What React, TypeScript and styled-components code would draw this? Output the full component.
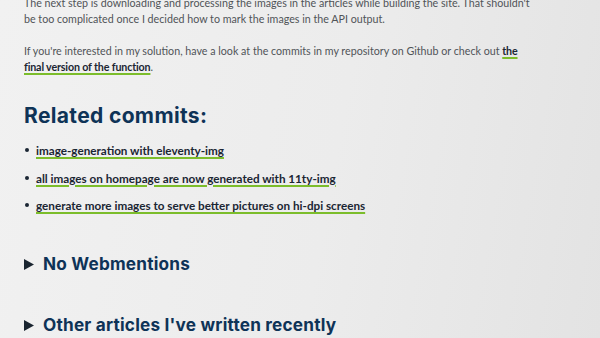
import React from "react";
import styled, { createGlobalStyle } from "styled-components";

const GlobalStyle = createGlobalStyle`
  html, body {
    margin: 0;
    padding: 0;
    height: 100%;
    overflow: hidden;
  }
  body {
    background: linear-gradient(100deg, #f1f1f1 0%, #ececec 55%, #e3e3e3 100%);
    font-family: Lato, "Liberation Sans", sans-serif;
  }
`;

const Article = styled.main`
  width: 510px;
  padding: 0 24px;
  margin-top: -5px;
  color: #505458;
`;

const Paragraph = styled.p`
  margin: 0 0 16px;
  font-size: 10.7px;
  line-height: 16px;
`;

const TextLink = styled.a<{ $size?: number }>`
  color: #1b2633;
  font-weight: 700;
  font-size: ${(p) => (p.$size ? `${p.$size}px` : "inherit")};
  letter-spacing: ${(p) => (p.$size ? "0" : "-0.15px")};
  text-decoration: underline;
  text-decoration-color: #7cbd2b;
  text-decoration-thickness: 2px;
  text-underline-offset: 2px;
`;

const Heading = styled.h2`
  margin: 28px 0 13px;
  font-family: Inter, "Liberation Sans", sans-serif;
  font-size: 21px;
  line-height: 26px;
  font-weight: 700;
  color: #0e3357;
  letter-spacing: 0.35px;
`;

const CommitList = styled.ul`
  margin: 0;
  padding: 0 0 0 12px;
  list-style: none;
`;

const CommitItem = styled.li`
  position: relative;
  font-size: 11.7px;
  line-height: 16px;
  margin-bottom: 11.5px;
  &::before {
    content: "";
    position: absolute;
    left: -11px;
    top: 6px;
    width: 4px;
    height: 4px;
    border-radius: 50%;
    background: #1b2633;
  }
`;

const Details = styled.details<{ $gap: number }>`
  margin-top: ${(p) => p.$gap}px;
`;

const Summary = styled.summary`
  list-style: none;
  display: flex;
  align-items: center;
  gap: 9px;
  font-family: Inter, "Liberation Sans", sans-serif;
  font-size: 17.2px;
  line-height: 22px;
  font-weight: 700;
  color: #0e3357;
  letter-spacing: 0.2px;
  cursor: pointer;
  &::-webkit-details-marker {
    display: none;
  }
`;

const Marker = () => (
  <svg width="10" height="11" viewBox="0 0 10 11" aria-hidden="true">
    <path d="M0 0 L10 5.5 L0 11 Z" fill="#1a2530" />
  </svg>
);

const commits = [
  "image-generation with eleventy-img",
  "all images on homepage are now generated with 11ty-img",
  "generate more images to serve better pictures on hi-dpi screens",
];

export default function App() {
  return (
    <>
      <GlobalStyle />
      <Article>
        <Paragraph>
          The next step is downloading and processing the images in the articles while
          building the site. That shouldn't be too complicated once I decided how to mark
          the images in the API output.
        </Paragraph>
        <Paragraph>
          If you're interested in my solution, have a look at the commits in my repository
          on Github or check out <TextLink href="#">the final version of the function</TextLink>.
        </Paragraph>
        <Heading>Related commits:</Heading>
        <CommitList>
          {commits.map((c) => (
            <CommitItem key={c}>
              <TextLink href="#" $size={11.7}>{c}</TextLink>
            </CommitItem>
          ))}
        </CommitList>
        <Details $gap={40}>
          <Summary>
            <Marker />
            No Webmentions
          </Summary>
        </Details>
        <Details $gap={39}>
          <Summary>
            <Marker />
            Other articles I've written recently
          </Summary>
        </Details>
      </Article>
    </>
  );
}
